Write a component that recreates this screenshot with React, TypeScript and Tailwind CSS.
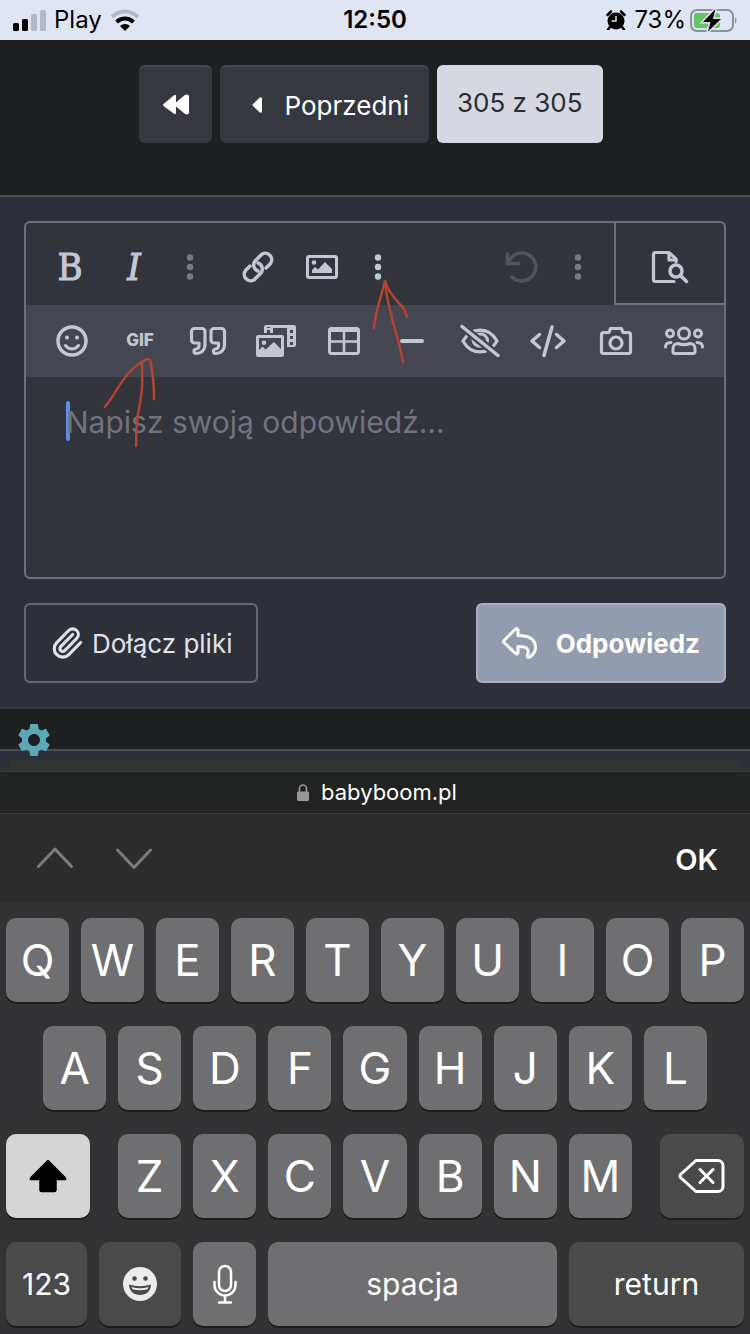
import type { ReactNode } from "react";
import clsx from "clsx";
import { Paperclip } from "lucide-react";
import { MdSettings } from "react-icons/md";

function Icon({ children, className }: { children: ReactNode; className?: string }) {
    return (
        <svg
            viewBox="0 0 40 40"
            className={clsx("size-10 shrink-0", className)}
            fill="none"
            stroke="currentColor"
            strokeWidth={3.5}
            strokeLinecap="round"
            strokeLinejoin="round"
            aria-hidden="true"
        >
            {children}
        </svg>
    );
}

const DotsIcon = () => (
    <Icon>
        <g fill="currentColor" stroke="none">
            <circle cx="20" cy="10.5" r="3.2" />
            <circle cx="20" cy="20" r="3.2" />
            <circle cx="20" cy="29.5" r="3.2" />
        </g>
    </Icon>
);

const LinkIcon = () => (
    <Icon>
        <path d="m28 21 4.300-4.300A6.400 6.400 0 0 0 23.300 7.700l-6 6A6.400 6.400 0 0 0 20 24" />
        <path d="m12 19-4.300 4.300A6.400 6.400 0 0 0 16.700 32.300l6-6A6.400 6.400 0 0 0 20 16" />
    </Icon>
);

const ImageIcon = () => (
    <Icon>
        <rect x="5.5" y="9.5" width="29" height="21" rx="1.5" strokeWidth={3} />
        <circle cx="12" cy="15.500" r="2.300" fill="currentColor" stroke="none" />
        <path d="M10 26v-3l3-3 3 2.500 7-7.500 7 7v4z" fill="currentColor" stroke="none" />
    </Icon>
);

const UndoIcon = () => (
    <Icon>
        <path d="M5.500 5.500v11H18" strokeLinejoin="miter" strokeLinecap="butt" />
        <path d="M10 30A14 14 0 1 0 7 14" />
    </Icon>
);

const PreviewIcon = () => (
    <Icon>
        <path d="M26 15V12l-7-6.500H5.500a2 2 0 0 0-2 2v25a2 2 0 0 0 2 2H24" strokeWidth={3.2} />
        <path d="M19 6v7h7" strokeWidth={3.2} />
        <circle cx="26" cy="24" r="6" />
        <path d="m31 29 5.500 5.500" />
    </Icon>
);

const SmileIcon = () => (
    <Icon>
        <circle cx="20" cy="20" r="14" />
        <path d="M13.500 24.500c3.500 4.500 9.500 4.500 13 0" strokeWidth={3} />
        <g fill="currentColor" stroke="none">
            <circle cx="15" cy="16.500" r="2" />
            <circle cx="25" cy="16.500" r="2" />
        </g>
    </Icon>
);

const QUOTE =
    "M11 22H6.500a3 3 0 0 1-3-3v-8.500a3 3 0 0 1 3-3H14a3 3 0 0 1 3 3V24a8.500 8.500 0 0 1-8.500 8.500H8a2 2 0 0 1-2-2 2.500 2.500 0 0 1 2-2.500 3 3 0 0 0 3-3z";

const QuoteIcon = () => (
    <Icon>
        <g strokeWidth={3.2}>
            <path d={QUOTE} />
            <path d={QUOTE} transform="translate(19.5)" />
        </g>
    </Icon>
);

const MediaIcon = () => (
    <Icon>
        <g fill="currentColor" stroke="none">
            <path
                fillRule="evenodd"
                d="M10 4h28a2 2 0 0 1 2 2v18a2 2 0 0 1-2 2h-7v-3V7H17v5h-3V9h-3v3H8V6a2 2 0 0 1 2-2zM34 9v3h3V9zM34 15v3h3v-3zM34 21v3h3v-3zM11 6v1h3V6z"
            />
            <path
                fillRule="evenodd"
                d="M2 14h24a2 2 0 0 1 2 2v18a2 2 0 0 1-2 2H2a2 2 0 0 1-2-2V16a2 2 0 0 1 2-2zM3 17v12l3.500-3.500 3 3L18 21l7 7V17zM8 19.500a2.300 2.300 0 1 1 0 4.600 2.300 2.300 0 0 1 0-4.600z"
            />
        </g>
    </Icon>
);

const TableIcon = () => (
    <Icon>
        <rect x="5.500" y="7.500" width="29" height="25" rx="2" strokeWidth={3} />
        <path d="M6 9.500h28" strokeWidth={3} />
        <path d="M20 9v23M6 20.500h28" strokeWidth={2.5} />
    </Icon>
);

const LineIcon = () => (
    <Icon>
        <path d="M10 20h20" strokeWidth={4} />
    </Icon>
);

const HiddenIcon = () => (
    <Icon>
        <path d="M3 20c8-14.500 26-14.500 34 0-8 14.500-26 14.500-34 0z" strokeWidth={3.2} />
        <path d="M17 14c6-3 12 2 10 8" strokeWidth={3} />
        <path d="M13 18c0 5 4 8 9 7" strokeWidth={3} />
        <path d="m2 5.500 36 29" className="stroke-[#444751]" strokeWidth={8} />
        <path d="m2 5.500 36 29" strokeWidth={3.5} />
    </Icon>
);

const CodeIcon = () => (
    <Icon>
        <path d="M11.500 13.500 4 20l7.500 6.500M28.500 13.500 36 20l-7.500 6.500M24 6l-8 28.500" />
    </Icon>
);

const CameraIcon = () => (
    <Icon>
        <path
            d="M7.500 11.500H13l1.500-4h11l1.500 4h5.500a2 2 0 0 1 2 2v17a2 2 0 0 1-2 2h-25a2 2 0 0 1-2-2v-17a2 2 0 0 1 2-2z"
            strokeWidth={3.2}
        />
        <circle cx="20" cy="22" r="6" strokeWidth={3.2} />
    </Icon>
);

const UsersIcon = () => (
    <Icon>
        <g strokeWidth={3}>
            <circle cx="20" cy="12.500" r="5.500" />
            <circle cx="6" cy="12.500" r="3.500" />
            <circle cx="34" cy="12.500" r="3.500" />
            <path d="M14 22.500c4 1.500 8 1.500 12 0 3.500 0 5 2.500 5 5V31a1.500 1.500 0 0 1-1.500 1.500h-19A1.500 1.500 0 0 1 9 31v-3.500c0-2.500 1.500-5 5-5z" />
            <path d="M1.500 26c0-3 1.500-4.500 5.500-4.500M38.500 26c0-3-1.500-4.500-5.500-4.500" />
        </g>
    </Icon>
);

const ReplyIcon = () => (
    <Icon>
        <path
            d="M15.500 6 4 17.500a1.500 1.500 0 0 0 0 2L15.500 30.500c1 1 2.500.5 2.500-1v-6c7 0 12 1 9.500 8.500-.7 2 .8 3 2.500 1.700 3-2 5.500-5 5.500-9.200 0-8.500-7-12-17.500-12V7c0-1.500-1.500-2-2.500-1z"
            strokeWidth={3}
        />
    </Icon>
);

type Tool = { label: string; icon: ReactNode };

const EXTRA_TOOLS: Tool[] = [
    { label: "Emotikony", icon: <SmileIcon /> },
    { label: "Wstaw GIF", icon: <span className="text-[17px] font-extrabold">GIF</span> },
    { label: "Cytat", icon: <QuoteIcon /> },
    { label: "Media", icon: <MediaIcon /> },
    { label: "Tabela", icon: <TableIcon /> },
    { label: "Linia pozioma", icon: <LineIcon /> },
    { label: "Spoiler", icon: <HiddenIcon /> },
    { label: "Kod", icon: <CodeIcon /> },
    { label: "Zdjęcie", icon: <CameraIcon /> },
    { label: "Użytkownicy", icon: <UsersIcon /> },
];

function ToolButton({ label, children, className }: { label: string; children: ReactNode; className?: string }) {
    return (
        <button type="button" aria-label={label} className={clsx("flex h-full items-center justify-center", className)}>
            {children}
        </button>
    );
}

function StatusBar() {
    return (
        <header className="grid h-10 grid-cols-3 items-center bg-[#e0e5f4] px-3 text-2xl text-black">
            <div className="flex items-center gap-2">
                <svg viewBox="0 0 34 22" className="h-[22px] w-[34px]" aria-hidden="true">
                    <rect x="1" y="14" width="6" height="8" rx="1.5" />
                    <rect x="10" y="10" width="6" height="12" rx="1.5" />
                    <rect x="19" y="5" width="6" height="17" rx="1.5" className="fill-[#b5b9c5]" />
                    <rect x="28" y="1" width="6" height="21" rx="1.5" className="fill-[#b5b9c5]" />
                </svg>
                <span>Play</span>
                <svg viewBox="0 0 30 22" className="h-[22px] w-[30px]" fill="none" strokeWidth="4" aria-hidden="true">
                    <path d="M2 8c7.500-7.300 18.500-7.300 26 0" className="stroke-[#b5b9c5]" />
                    <path d="M6.500 13c5-4.700 12-4.700 17 0" className="stroke-black" />
                    <path d="M10 17c3-2.700 7-2.700 10 0l-5 5z" className="fill-black" />
                </svg>
            </div>
            <span className="text-center font-semibold">12:50</span>
            <div className="flex items-center justify-end gap-1">
                <svg viewBox="0 0 20 20" className="mr-1 size-5" aria-hidden="true">
                    <circle cx="10" cy="11" r="8.5" />
                    <path
                        d="M1.500 5 5 1.500M18.500 5 15 1.500M4 17l-2 2.500M16 17l2 2.500"
                        className="stroke-black"
                        strokeWidth="2.5"
                        strokeLinecap="round"
                    />
                    <path d="M10 6v5H5.500" fill="none" className="stroke-[#e0e5f4]" strokeWidth="1.5" />
                </svg>
                <span>73%</span>
                <svg viewBox="0 0 48 24" className="h-6 w-12" aria-hidden="true">
                    <rect x="1" y="2" width="42" height="21" rx="6" fill="none" className="stroke-[#8d919b]" strokeWidth="2" />
                    <rect x="4" y="5" width="26" height="15" rx="3" className="fill-[#65c466]" />
                    <path d="M45 9v7q3-3.500 0-7z" className="fill-[#8d919b]" />
                    <path
                        d="M25.500 1 13 14h7.500L18 23.500 31 11h-8z"
                        className="fill-black stroke-[#e0e5f4]"
                        strokeWidth="3"
                        paintOrder="stroke"
                    />
                </svg>
            </div>
        </header>
    );
}

function PageNav() {
    return (
        <nav className="flex h-[155px] items-start justify-center gap-2 bg-[#1e1f21] pt-[25px] pr-2 text-[26px]">
            <a
                href="#first"
                aria-label="Pierwsza strona"
                className="flex h-[78px] w-[73px] items-center justify-center rounded-md border-t-2 border-[#46484f] bg-[#36383f] text-white"
            >
                <svg viewBox="0 0 28 22" className="h-[22px] w-7" fill="currentColor" aria-hidden="true">
                    <path d="M1.500 10 12 1.200q2-1 2 1v6.300L22.500 1.200q3.500-1.500 4.500.8v17q-1 2.500-4.500.5L14 12.500v6.300q0 2-2 1L1.500 12q-1-1 0-2z" />
                </svg>
            </a>
            <a
                href="#previous"
                className="flex h-[78px] items-center gap-[22px] rounded-md border-t-2 border-[#46484f] bg-[#36383f] pr-5 pl-8 text-white"
            >
                <svg viewBox="0 0 10 16" className="h-4 w-2.5" fill="currentColor" aria-hidden="true">
                    <path d="M1 7 7.500.8Q10-.5 10 2v12q0 2.500-2.500 1.200L1 9Q0 8 1 7z" />
                </svg>
                Poprzedni
            </a>
            <button type="button" className="h-[78px] rounded-md bg-[#d6d9e1] px-5 pb-1 text-[#2b2c31]">
                305 z 305
            </button>
        </nav>
    );
}

const SLAB = "w-16 font-['DejaVu_Serif_Condensed','DejaVu_Serif',serif] text-[38px] [-webkit-text-stroke:1px_#c3c7d4]";

function Editor() {
    return (
        <div className="overflow-hidden rounded-md border-2 border-[#6b7080] bg-[#31343b] text-[#c3c7d4]">
            <div className="flex h-[82px]">
                <div className="flex flex-1 items-center px-3 pt-1.5">
                    <ToolButton label="Pogrubienie" className={SLAB}>
                        B
                    </ToolButton>
                    <ToolButton label="Kursywa" className={clsx(SLAB, "italic")}>
                        I
                    </ToolButton>
                    <ToolButton label="Więcej opcji tekstu" className="w-12 text-[#767985]">
                        <DotsIcon />
                    </ToolButton>
                    <ToolButton label="Wstaw link" className="ml-3 w-16">
                        <LinkIcon />
                    </ToolButton>
                    <ToolButton label="Wstaw obraz" className="w-16">
                        <ImageIcon />
                    </ToolButton>
                    <ToolButton label="Więcej" className="w-12">
                        <DotsIcon />
                    </ToolButton>
                    <ToolButton label="Cofnij" className="ml-auto w-16 text-[#50535d]">
                        <UndoIcon />
                    </ToolButton>
                    <ToolButton label="Więcej opcji" className="w-12 text-[#767985]">
                        <DotsIcon />
                    </ToolButton>
                </div>
                <ToolButton label="Podgląd" className="w-[110px] border-b-2 border-l-2 border-[#6b7080] pt-2">
                    <PreviewIcon />
                </ToolButton>
            </div>
            <div className="grid h-[72px] grid-cols-10 bg-[#444751] pr-1.5 pl-3">
                {EXTRA_TOOLS.map((tool) => (
                    <ToolButton key={tool.label} label={tool.label}>
                        {tool.icon}
                    </ToolButton>
                ))}
            </div>
            <div className="flex h-[200px] pt-6 pl-10">
                <span className="h-10 w-1 rounded-sm bg-[#5f8ce8]" />
                <textarea
                    aria-label="Odpowiedź"
                    placeholder="Napisz swoją odpowiedź..."
                    className="-ml-1 flex-1 resize-none bg-transparent pt-px text-[30px] leading-10 outline-none placeholder:text-[#70737d]"
                />
            </div>
        </div>
    );
}

// hand-drawn arrows pointing at the "more" and GIF buttons
function Arrows() {
    return (
        <svg
            viewBox="0 197 750 300"
            className="pointer-events-none absolute top-0 left-0 h-[300px] w-[750px]"
            fill="none"
            stroke="#b5432f"
            strokeWidth="2.5"
            strokeLinecap="round"
            strokeLinejoin="round"
            aria-hidden="true"
        >
            <path d="M105 407C113 397 120 383 127 375S143 360 148 359Q151 359 151 365C154 380 154 390 154 399" />
            <path d="M142 362C143 395 141 395 138 415S137 435 136 446" />
            <path d="M374 328C376 308 381 298 385 281C388 293 398 302 404 309L407 317" />
            <path d="M385 281C388 315 396 325 403 362" />
        </svg>
    );
}

function ReplyForm() {
    return (
        <main className="relative border-t-2 border-b-2 border-t-[#4d4e53] border-b-[#37383e] bg-[#2d3038] p-6">
            <Editor />
            <div className="flex items-center justify-between pt-6 text-[26px]">
                <button
                    type="button"
                    className="flex h-20 items-center gap-2 rounded-md border-2 border-[#646772] pr-6 pl-6 text-[#e2e3e8]"
                >
                    <Paperclip className="size-[34px]" strokeWidth={2.2} />
                    Dołącz pliki
                </button>
                <button
                    type="button"
                    className="flex h-20 items-center gap-4 rounded-md border-2 border-[#aab0c2] bg-[#939bae] pr-6 pl-[22px] font-bold text-white"
                >
                    <ReplyIcon />
                    Odpowiedz
                </button>
            </div>
            <Arrows />
        </main>
    );
}

function PageFooter() {
    return (
        <footer className="relative">
            <div className="h-10 bg-[#1e1f21]" />
            <div className="h-[22px] border-t-2 border-[#4d4e53] bg-[#2d3038] px-2.5 pt-2.5">
                <div className="h-2.5 bg-[#30362f]" />
            </div>
            <button type="button" aria-label="Ustawienia" className="absolute top-[11px] left-3.5 text-[#5ba8b7]">
                <MdSettings className="size-10" />
            </button>
        </footer>
    );
}

function AddressBar() {
    return (
        <div className="flex h-[43px] items-center justify-center gap-3 border-y border-[#3d3f3f] bg-[#212322] pl-1 text-[22px] text-white">
            <svg viewBox="0 0 12 17" className="h-[17px] w-3" aria-hidden="true">
                <path d="M2.500 8V4.500a3.500 3.500 0 0 1 7 0V8" fill="none" className="stroke-[#98989d]" strokeWidth="1.6" />
                <rect y="7.500" width="12" height="9.500" rx="1.500" className="fill-[#98989d]" />
            </svg>
            babyboom.pl
        </div>
    );
}

function AccessoryBar() {
    return (
        <div className="flex h-[88px] items-center bg-[#2c2c2d] pr-8 pl-[35px]">
            <div className="flex gap-[39px] text-[#7b7b7c]">
                <button type="button" aria-label="Poprzednie pole">
                    <Icon>
                        <path d="M3.500 28.500 20 11 36.500 28.500" strokeWidth={3} />
                    </Icon>
                </button>
                <button type="button" aria-label="Następne pole">
                    <Icon>
                        <path d="M3.500 12 20 29.500 36.500 12" strokeWidth={3} />
                    </Icon>
                </button>
            </div>
            <button type="button" className="ml-auto pt-1 text-[29px] font-semibold text-white">
                OK
            </button>
        </div>
    );
}

function Key({ children, label, className }: { children: ReactNode; label?: string; className?: string }) {
    return (
        <button
            type="button"
            aria-label={label}
            className={clsx(
                "flex h-[84px] min-w-0 items-center justify-center rounded-[10px] shadow-[0_2px_0_#1c1c1d]",
                className ?? "bg-[#6f6f71] text-[44px]",
            )}
        >
            {children}
        </button>
    );
}

const letters = (row: string) => row.split("").map((letter) => <Key key={letter}>{letter}</Key>);

function Keyboard() {
    return (
        <section aria-label="Klawiatura" className="flex flex-col gap-6 bg-[#323234] px-1.5 pt-4 pb-2 text-white">
            <div className="grid grid-cols-10 gap-3">{letters("QWERTYUIOP")}</div>
            <div className="grid grid-cols-9 gap-3 px-[37px]">{letters("ASDFGHJKL")}</div>
            <div className="grid grid-cols-[84fr_514fr_84fr] gap-7">
                <Key label="Shift" className="bg-[#d5d5d5] text-black">
                    <Icon>
                        <path
                            d="M20 4.500 2.500 22v1.500H12V34a1.500 1.500 0 0 0 1.500 1.500h13A1.500 1.500 0 0 0 28 34V23.500h9.500V22z"
                            fill="currentColor"
                            strokeWidth={1.5}
                        />
                    </Icon>
                </Key>
                <div className="grid grid-cols-7 gap-3">{letters("ZXCVBNM")}</div>
                <Key label="Usuń" className="bg-[#4a4a4b]">
                    <svg
                        viewBox="0 0 48 36"
                        className="h-9 w-12"
                        fill="none"
                        stroke="currentColor"
                        strokeWidth="3"
                        strokeLinecap="round"
                        strokeLinejoin="round"
                        aria-hidden="true"
                    >
                        <path d="M18 2.500h22a5 5 0 0 1 5 5v21a5 5 0 0 1-5 5H18L2.500 19.500q-1-1.500 0-3z" />
                        <path d="m22 11.500 13 13M35 11.500l-13 13" />
                    </svg>
                </Key>
            </div>
            <div className="grid grid-cols-[81fr_82fr_63fr_289fr_175fr] gap-3">
                <Key className="bg-[#4a4a4b] text-[30px]">123</Key>
                <Key label="Emoji" className="bg-[#4a4a4b] text-[#ececec]">
                    <Icon>
                        <circle cx="20" cy="20" r="17" fill="currentColor" stroke="none" />
                        <g className="fill-[#4a4a4b]" stroke="none">
                            <circle cx="14.500" cy="14.500" r="2.300" />
                            <circle cx="25.500" cy="14.500" r="2.300" />
                            <path d="M9 20.500q11 3.500 22 0C31 27 26 31 20 31S9 27 9 20.500z" />
                        </g>
                        <path d="M11.500 23q8.500 2.500 17 0l-1 2.200q-7.500 2-15 0z" fill="currentColor" stroke="none" />
                    </Icon>
                </Key>
                <Key label="Dyktowanie" className="bg-[#6f6f71]">
                    <Icon>
                        <g strokeWidth={2.5}>
                            <rect x="14" y="2" width="12" height="25" rx="6" />
                            <path d="M9.500 18v3a10.500 10.500 0 0 0 21 0v-3M20 31.500V38M14 38.500h12" />
                        </g>
                    </Icon>
                </Key>
                <Key className="bg-[#6f6f71] text-[30px]">spacja</Key>
                <Key className="bg-[#4a4a4b] text-[30px]">return</Key>
            </div>
        </section>
    );
}

export default function App() {
    return (
        <div className="min-h-screen bg-[#323234] font-['Inter','Liberation_Sans',sans-serif]">
            <StatusBar />
            <PageNav />
            <ReplyForm />
            <PageFooter />
            <AddressBar />
            <AccessoryBar />
            <Keyboard />
        </div>
    );
}
